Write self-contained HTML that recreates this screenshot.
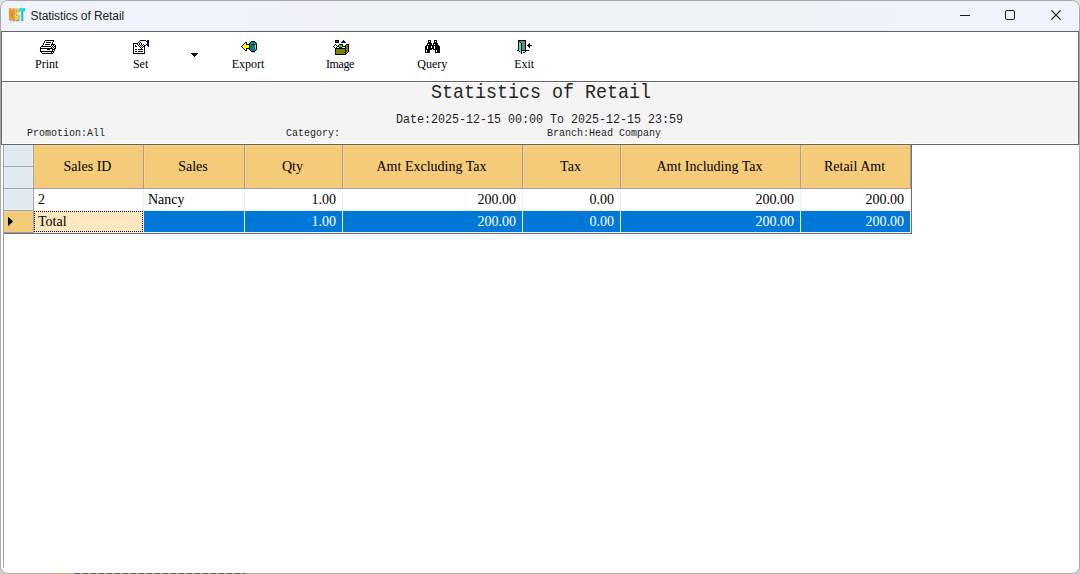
<!DOCTYPE html>
<html lang="en">
<head>
<meta charset="utf-8">
<title>Statistics of Retail</title>
<style>
html,body{margin:0;padding:0;}
body{width:1080px;height:574px;overflow:hidden;background:linear-gradient(#e3e3e3 0 50%,#cdcdcd 50% 100%);position:relative;font-family:"Liberation Serif",serif;}
div,svg,span{position:absolute;box-sizing:border-box;}
#win{left:0;top:0;width:1080px;height:574px;border:1px solid #a9a9a9;border-radius:8px;background:#fff;}
#titlebar{left:1px;top:1px;width:1078px;height:30px;background:linear-gradient(90deg,#eff3fb 0%,#eff3fa 22%,#eef3f7 42%,#eef3f7 68%,#eff3fb 84%,#eff3fb 100%);border-radius:7px 7px 0 0;}
#wtitle{left:30.5px;top:8px;font-family:"Liberation Sans",sans-serif;font-size:12px;line-height:16px;color:#222;white-space:nowrap;letter-spacing:-0.09px;}
#toolbar{left:1px;top:31px;width:1078px;height:51px;border:1px solid #646464;background:#fff;}
#panel{left:1px;top:81px;width:1078px;height:64px;border:1px solid #646464;background:#f4f4f4;box-shadow:inset 0 0 0 1px #fff;}
.tb{top:57px;height:14px;line-height:14px;font-size:12px;color:#000;white-space:nowrap;transform:translateX(-50%);}
.ico{shape-rendering:crispEdges;}
.mono{font-family:"Liberation Mono",monospace;color:#1e1e1e;white-space:pre;transform-origin:0 0;}
#gl{left:3px;top:145px;width:1px;height:423px;background:#a0a0a0;}
.hc{top:145px;height:44px;background:#f4cb78;border-right:1px solid #a0a0a0;border-bottom:1px solid #a0a0a0;box-shadow:inset 1px 1px 0 #fad485;font-size:14px;line-height:43px;text-align:center;padding-right:2px;color:#000;white-space:nowrap;}
.ind{left:4px;width:30px;height:22px;background:#e1e8f0;border-right:1px solid #a0a0a0;border-bottom:1px solid #a0a0a0;box-shadow:inset 1px 1px 0 #e8eff9,inset -1px -1px 0 #e8eff9;}
.dc{height:22px;border-right:1px solid #f0f0f0;border-bottom:1px solid #f0f0f0;font-size:14px;line-height:21px;color:#000;white-space:nowrap;background:#fff;}
.dc span{position:static;}
.r{text-align:right;padding-right:6px;}
.l{text-align:left;padding-left:4px;}
.sel{background:#0078d7;color:#fff;}
.foc{background:#ffe8bf;}
</style>
</head>
<body>
<div id="win"></div><div id="titlebar"></div>
<svg id="logo" style="left:8px;top:8px" width="19" height="15" viewBox="0 0 19 15" font-family="Liberation Sans, sans-serif" font-weight="bold" font-size="16.5"><text x="1.8" y="13.0" textLength="5.3" lengthAdjust="spacingAndGlyphs" fill="#77777e" stroke="#77777e" stroke-width="0.7">N</text><text x="7.1" y="13.0" textLength="4.5" lengthAdjust="spacingAndGlyphs" fill="#77777e" stroke="#77777e" stroke-width="0.7">S</text><text x="11.5" y="13.0" textLength="5.3" lengthAdjust="spacingAndGlyphs" fill="#77777e" stroke="#77777e" stroke-width="0.7">T</text><text x="1" y="12.3" textLength="5.3" lengthAdjust="spacingAndGlyphs" fill="#ff8a0c" stroke="#ff8a0c" stroke-width="0.7">N</text><text x="6.3" y="12.3" textLength="4.5" lengthAdjust="spacingAndGlyphs" fill="#ffd400" stroke="#ffd400" stroke-width="0.7">S</text><text x="10.7" y="12.3" textLength="5.3" lengthAdjust="spacingAndGlyphs" fill="#08f4f4" stroke="#08f4f4" stroke-width="0.7">T</text></svg>
<div id="wtitle">Statistics of Retail</div>
<svg style="left:955px;top:5px" width="115" height="22" viewBox="0 0 115 22" fill="none" stroke="#1a1a1a" stroke-width="1"><path d="M5 10.5h10"/><rect x="50.5" y="5.5" width="9" height="9" rx="1.5"/><path stroke-width="1.2" d="M96.4 5.4l9.2 9.2M105.6 5.4l-9.2 9.2"/></svg>
<div id="toolbar"></div><div id="panel"></div>
<svg class="ico" style="left:40px;top:40px" width="16" height="14" viewBox="0 0 16 14"><path fill="#000" d="M5 0h9v1h-9zM4 1h1v1h-1zM13 1h1v1h-1zM4 2h1v1h-1zM6 2h5v1h-5zM12 2h1v1h-1zM3 3h1v1h-1zM12 3h1v1h-1zM3 4h1v1h-1zM5 4h5v1h-5zM11 4h4v1h-4zM2 5h1v1h-1zM11 5h1v1h-1zM13 5h1v1h-1zM15 5h1v1h-1zM1 6h10v1h-10zM12 6h1v1h-1zM14 6h2v1h-2zM0 7h1v1h-1zM11 7h1v1h-1zM13 7h1v1h-1zM15 7h1v1h-1zM0 8h13v1h-13zM14 8h2v1h-2zM0 9h1v1h-1zM7 9h3v1h-3zM12 9h3v1h-3zM0 10h1v1h-1zM12 10h1v1h-1zM14 10h1v1h-1zM0 11h14v1h-14zM1 12h1v1h-1zM11 12h1v1h-1zM13 12h1v1h-1zM2 13h11v1h-11z"/><path fill="#fff" d="M5 1h8v1h-8zM5 2h1v1h-1zM11 2h1v1h-1zM4 3h8v1h-8zM4 4h1v1h-1zM10 4h1v1h-1zM3 5h8v1h-8zM12 5h1v1h-1zM14 5h1v1h-1zM11 6h1v1h-1zM13 6h1v1h-1zM1 7h10v1h-10zM12 7h1v1h-1zM14 7h1v1h-1zM13 8h1v1h-1zM1 9h6v1h-6zM10 9h2v1h-2zM1 10h6v1h-6zM10 10h2v1h-2zM13 10h1v1h-1zM2 12h9v1h-9zM12 12h1v1h-1z"/><path fill="#ff0" d="M7 10h3v1h-3z"/></svg><svg class="ico" style="left:133px;top:40px" width="16" height="14" viewBox="0 0 16 14"><path fill="#000" d="M7 0h6v1h-6zM6 1h1v1h-1zM13 1h1v1h-1zM5 2h1v1h-1zM7 2h1v1h-1zM0 3h5v1h-5zM6 3h1v1h-1zM8 3h1v1h-1zM0 4h1v1h-1zM4 4h1v1h-1zM6 4h1v1h-1zM8 4h1v1h-1zM10 4h1v1h-1zM13 4h1v1h-1zM0 5h1v1h-1zM2 5h1v1h-1zM5 5h1v1h-1zM7 5h1v1h-1zM9 5h1v1h-1zM11 5h2v1h-2zM0 6h1v1h-1zM2 6h2v1h-2zM6 6h1v1h-1zM8 6h1v1h-1zM10 6h2v1h-2zM0 7h1v1h-1zM7 7h1v1h-1zM9 7h1v1h-1zM11 7h1v1h-1zM0 8h1v1h-1zM8 8h1v1h-1zM11 8h1v1h-1zM0 9h1v1h-1zM2 9h2v1h-2zM5 9h5v1h-5zM11 9h1v1h-1zM0 10h1v1h-1zM11 10h1v1h-1zM0 11h1v1h-1zM2 11h2v1h-2zM5 11h5v1h-5zM11 11h1v1h-1zM0 12h1v1h-1zM11 12h1v1h-1zM0 13h12v1h-12z"/><path fill="#000080" d="M14 0h2v1h-2zM14 1h2v1h-2zM14 2h2v1h-2zM14 3h2v1h-2zM14 4h2v1h-2zM14 5h2v1h-2zM15 6h1v1h-1z"/><path fill="#fff" d="M7 1h6v1h-6zM6 2h1v1h-1zM8 2h6v1h-6zM5 3h1v1h-1zM7 3h1v1h-1zM9 3h5v1h-5zM1 4h3v1h-3zM5 4h1v1h-1zM7 4h1v1h-1zM9 4h1v1h-1zM11 4h2v1h-2zM1 5h1v1h-1zM3 5h2v1h-2zM6 5h1v1h-1zM8 5h1v1h-1zM10 5h1v1h-1zM1 6h1v1h-1zM4 6h2v1h-2zM7 6h1v1h-1zM9 6h1v1h-1zM1 7h6v1h-6zM8 7h1v1h-1zM10 7h1v1h-1zM1 8h7v1h-7zM9 8h2v1h-2zM1 9h1v1h-1zM4 9h1v1h-1zM10 9h1v1h-1zM1 10h10v1h-10zM1 11h1v1h-1zM4 11h1v1h-1zM10 11h1v1h-1zM1 12h10v1h-10z"/></svg><svg class="ico" style="left:241px;top:41px" width="16" height="12" viewBox="0 0 16 12"><path fill="#000" d="M10 0h4v1h-4zM4 1h2v1h-2zM9 1h1v1h-1zM14 1h1v1h-1zM3 2h1v1h-1zM5 2h1v1h-1zM8 2h1v1h-1zM15 2h1v1h-1zM2 3h1v1h-1zM5 3h4v1h-4zM10 3h4v1h-4zM15 3h1v1h-1zM1 4h1v1h-1zM8 4h1v1h-1zM15 4h1v1h-1zM0 5h1v1h-1zM8 5h1v1h-1zM15 5h1v1h-1zM1 6h1v1h-1zM8 6h1v1h-1zM15 6h1v1h-1zM2 7h1v1h-1zM5 7h4v1h-4zM15 7h1v1h-1zM3 8h1v1h-1zM5 8h1v1h-1zM8 8h1v1h-1zM15 8h1v1h-1zM4 9h2v1h-2zM9 9h1v1h-1zM14 9h1v1h-1zM10 10h4v1h-4z"/><path fill="#009c9c" d="M10 1h4v1h-4zM10 2h4v1h-4z"/><path fill="#ff0" d="M4 2h1v1h-1zM3 3h2v1h-2zM2 4h6v1h-6zM1 5h7v1h-7zM2 6h6v1h-6zM3 7h2v1h-2zM4 8h1v1h-1z"/><path fill="#008080" d="M9 2h1v1h-1zM14 2h1v1h-1zM9 3h1v1h-1zM14 3h1v1h-1zM9 4h5v1h-5zM9 5h5v1h-5zM9 6h5v1h-5zM9 7h5v1h-5zM9 8h6v1h-6zM10 9h4v1h-4z"/><path fill="#c8c8c8" d="M14 4h1v1h-1zM14 5h1v1h-1zM14 6h1v1h-1zM14 7h1v1h-1zM10 11h4v1h-4z"/></svg><svg class="ico" style="left:333px;top:40px" width="16" height="15" viewBox="0 0 16 15"><path fill="#000" d="M2 0h4v1h-4zM10 0h1v1h-1zM2 1h1v1h-1zM5 1h1v1h-1zM9 1h1v1h-1zM11 1h1v1h-1zM2 2h4v1h-4zM8 2h1v1h-1zM12 2h1v1h-1zM2 4h1v1h-1zM6 4h4v1h-4zM13 4h3v1h-3zM1 5h1v1h-1zM3 5h1v1h-1zM5 5h1v1h-1zM9 5h1v1h-1zM12 5h1v1h-1zM15 5h1v1h-1zM0 6h1v1h-1zM4 6h2v1h-2zM9 6h4v1h-4zM15 6h1v1h-1zM1 7h1v1h-1zM3 7h1v1h-1zM6 7h3v1h-3zM12 7h1v1h-1zM15 7h1v1h-1zM2 8h11v1h-11zM15 8h1v1h-1zM2 9h1v1h-1zM12 9h1v1h-1zM15 9h1v1h-1zM2 10h1v1h-1zM12 10h1v1h-1zM15 10h1v1h-1zM2 11h1v1h-1zM12 11h1v1h-1zM15 11h1v1h-1zM2 12h1v1h-1zM12 12h1v1h-1zM14 12h1v1h-1zM2 13h1v1h-1zM12 13h2v1h-2zM2 14h11v1h-11z"/><path fill="#f00" d="M3 1h2v1h-2z"/><path fill="#00f" d="M10 1h1v1h-1zM9 2h3v1h-3z"/><path fill="#fff" d="M2 5h1v1h-1zM1 6h3v1h-3zM2 7h1v1h-1zM4 7h2v1h-2zM9 7h3v1h-3z"/><path fill="#0f0" d="M6 5h3v1h-3zM6 6h3v1h-3z"/><path fill="#808000" d="M13 5h2v1h-2zM13 6h2v1h-2zM13 7h2v1h-2zM13 8h2v1h-2zM3 9h9v1h-9zM13 9h2v1h-2zM3 10h9v1h-9zM13 10h2v1h-2zM3 11h9v1h-9zM13 11h2v1h-2zM3 12h9v1h-9zM13 12h1v1h-1zM3 13h9v1h-9z"/></svg><svg class="ico" style="left:425px;top:40px" width="16" height="13" viewBox="0 0 16 13"><path fill="#000" d="M3 0h3v1h-3zM9 0h3v1h-3zM3 1h1v1h-1zM5 1h1v1h-1zM9 1h1v1h-1zM11 1h1v1h-1zM3 2h3v1h-3zM9 2h3v1h-3zM2 3h5v1h-5zM8 3h5v1h-5zM2 4h1v1h-1zM4 4h3v1h-3zM8 4h1v1h-1zM10 4h3v1h-3zM1 5h13v1h-13zM0 6h2v1h-2zM3 6h3v1h-3zM7 6h2v1h-2zM10 6h5v1h-5zM0 7h2v1h-2zM3 7h3v1h-3zM7 7h2v1h-2zM10 7h5v1h-5zM0 8h2v1h-2zM3 8h6v1h-6zM10 8h5v1h-5zM0 9h7v1h-7zM8 9h7v1h-7zM0 10h1v1h-1zM2 10h3v1h-3zM10 10h1v1h-1zM12 10h3v1h-3zM0 11h1v1h-1zM2 11h3v1h-3zM10 11h1v1h-1zM12 11h3v1h-3zM0 12h5v1h-5zM10 12h5v1h-5z"/><path fill="#fff" d="M4 1h1v1h-1zM10 1h1v1h-1zM3 4h1v1h-1zM9 4h1v1h-1zM2 6h1v1h-1zM6 6h1v1h-1zM9 6h1v1h-1zM2 7h1v1h-1zM6 7h1v1h-1zM9 7h1v1h-1zM2 8h1v1h-1zM9 8h1v1h-1zM1 10h1v1h-1zM11 10h1v1h-1zM1 11h1v1h-1zM11 11h1v1h-1z"/></svg><svg class="ico" style="left:517px;top:40px" width="16" height="14" viewBox="0 0 16 14"><path fill="#000" d="M1 0h8v1h-8zM1 1h2v1h-2zM8 1h1v1h-1zM1 2h1v1h-1zM3 2h1v1h-1zM8 2h1v1h-1zM1 3h1v1h-1zM4 3h1v1h-1zM8 3h1v1h-1zM12 3h1v1h-1zM1 4h1v1h-1zM4 4h1v1h-1zM8 4h1v1h-1zM11 4h2v1h-2zM1 5h1v1h-1zM4 5h1v1h-1zM8 5h1v1h-1zM10 5h5v1h-5zM1 6h1v1h-1zM4 6h1v1h-1zM8 6h1v1h-1zM11 6h2v1h-2zM1 7h1v1h-1zM4 7h1v1h-1zM8 7h1v1h-1zM12 7h1v1h-1zM1 8h1v1h-1zM4 8h1v1h-1zM8 8h1v1h-1zM1 9h1v1h-1zM4 9h1v1h-1zM8 9h1v1h-1zM0 10h2v1h-2zM4 10h8v1h-8zM2 11h1v1h-1zM4 11h1v1h-1zM8 11h1v1h-1zM4 12h1v1h-1zM6 12h2v1h-2zM4 13h1v1h-1z"/><path fill="#808080" d="M3 1h5v1h-5zM4 2h4v1h-4zM5 3h3v1h-3zM5 4h3v1h-3zM5 5h3v1h-3zM5 6h3v1h-3zM5 7h3v1h-3zM5 8h3v1h-3zM5 9h3v1h-3z"/><path fill="#0ff" d="M2 2h1v1h-1zM2 3h2v1h-2zM2 4h2v1h-2zM2 5h2v1h-2zM2 6h2v1h-2zM2 7h2v1h-2zM2 8h2v1h-2zM2 9h2v1h-2zM2 10h2v1h-2zM3 11h1v1h-1zM3 12h1v1h-1z"/></svg>
<div class="tb" style="left:46.7px">Print</div>
<div class="tb" style="left:140.6px">Set</div>
<div class="tb" style="left:248px">Export</div>
<div class="tb" style="left:340px;letter-spacing:-0.4px">Image</div>
<div class="tb" style="left:432.3px">Query</div>
<div class="tb" style="left:524.2px">Exit</div>
<svg class="ico" style="left:191px;top:53px" width="7" height="4" viewBox="0 0 7 4"><path fill="#000" d="M0 0h7v1h-7zM1 1h5v1h-5zM2 2h3v1h-3zM3 3h1v1h-1z"/></svg>
<div class="mono" id="ptitle" style="left:431px;top:80px;font-size:21px;line-height:25px;color:#262626;transform:scaleX(0.873)">Statistics of Retail</div>
<div class="mono" id="pdate1" style="left:396px;top:112px;font-size:13.5px;line-height:16px;transform:scaleX(0.864)">Date:</div>
<div class="mono" id="pdate2" style="left:431px;top:112px;font-size:13.5px;line-height:16px;transform:scaleX(0.864)">2025-12-15 00:00 To 2025-12-15 23:59</div>
<div class="mono" id="pprom" style="left:27px;top:126px;font-size:11.5px;line-height:14px;transform:scaleX(0.87)">Promotion:All</div>
<div class="mono" id="pcat" style="left:286px;top:126px;font-size:11.5px;line-height:14px;transform:scaleX(0.87)">Category:</div>
<div class="mono" id="pbr" style="left:547px;top:126px;font-size:11.5px;line-height:14px;transform:scaleX(0.87)">Branch:Head Company</div>
<div id="gl"></div>
<div class="ind" style="top:145px"></div>
<div class="ind" style="top:167px"></div>
<div class="ind" style="top:189px"></div>
<div class="ind" style="top:211px;background:#f4cb78;box-shadow:inset 1px 1px 0 #fad485"></div>
<svg class="ico" style="left:8px;top:216px" width="6" height="11" viewBox="0 0 6 11"><path fill="#000" d="M0 0.7l5 4.8L0 10.3z" shape-rendering="auto"/></svg>
<div class="hc" style="left:34px;width:110px">Sales ID</div>
<div class="hc" style="left:144px;width:101px">Sales</div>
<div class="hc" style="left:245px;width:98px">Qty</div>
<div class="hc" style="left:343px;width:180px">Amt Excluding Tax</div>
<div class="hc" style="left:523px;width:98px">Tax</div>
<div class="hc" style="left:621px;width:180px">Amt Including Tax</div>
<div class="hc" style="left:801px;width:110px">Retail Amt</div>
<div class="dc l" style="left:34px;top:189px;width:110px">2</div>
<div class="dc l foc" style="left:34px;top:211px;width:110px">Total</div>
<div class="dc l" style="left:144px;top:189px;width:101px">Nancy</div>
<div class="dc l sel" style="left:144px;top:211px;width:101px"></div>
<div class="dc r" style="left:245px;top:189px;width:98px">1.00</div>
<div class="dc r sel" style="left:245px;top:211px;width:98px">1.00</div>
<div class="dc r" style="left:343px;top:189px;width:180px">200.00</div>
<div class="dc r sel" style="left:343px;top:211px;width:180px">200.00</div>
<div class="dc r" style="left:523px;top:189px;width:98px">0.00</div>
<div class="dc r sel" style="left:523px;top:211px;width:98px">0.00</div>
<div class="dc r" style="left:621px;top:189px;width:180px">200.00</div>
<div class="dc r sel" style="left:621px;top:211px;width:180px">200.00</div>
<div class="dc r" style="left:801px;top:189px;width:110px">200.00</div>
<div class="dc r sel" style="left:801px;top:211px;width:110px">200.00</div>
<div style="left:911px;top:145px;width:1px;height:89px;background:#6e6e6e"></div>
<div style="left:4px;top:233px;width:908px;height:1px;background:#6e6e6e"></div>
<div style="left:4px;top:232px;width:30px;height:1px;background:#a0a0a0"></div>
<div id="focus" style="left:34px;top:211px;width:109px;height:21px;background:linear-gradient(90deg,#000 50%,transparent 50%) 0 0/2px 1px repeat-x,linear-gradient(90deg,#000 50%,transparent 50%) 0 100%/2px 1px repeat-x,linear-gradient(180deg,#000 50%,transparent 50%) 0 0/1px 2px repeat-y,linear-gradient(180deg,#000 50%,transparent 50%) 100% 0/1px 2px repeat-y"></div>
<div style="left:75px;top:573px;width:170px;height:1px;background:repeating-linear-gradient(90deg,#555 0 5px,#999 5px 8px)"></div>
<div style="left:55px;top:573px;width:11px;height:1px;background:#c9a56a"></div>
</body>
</html>
